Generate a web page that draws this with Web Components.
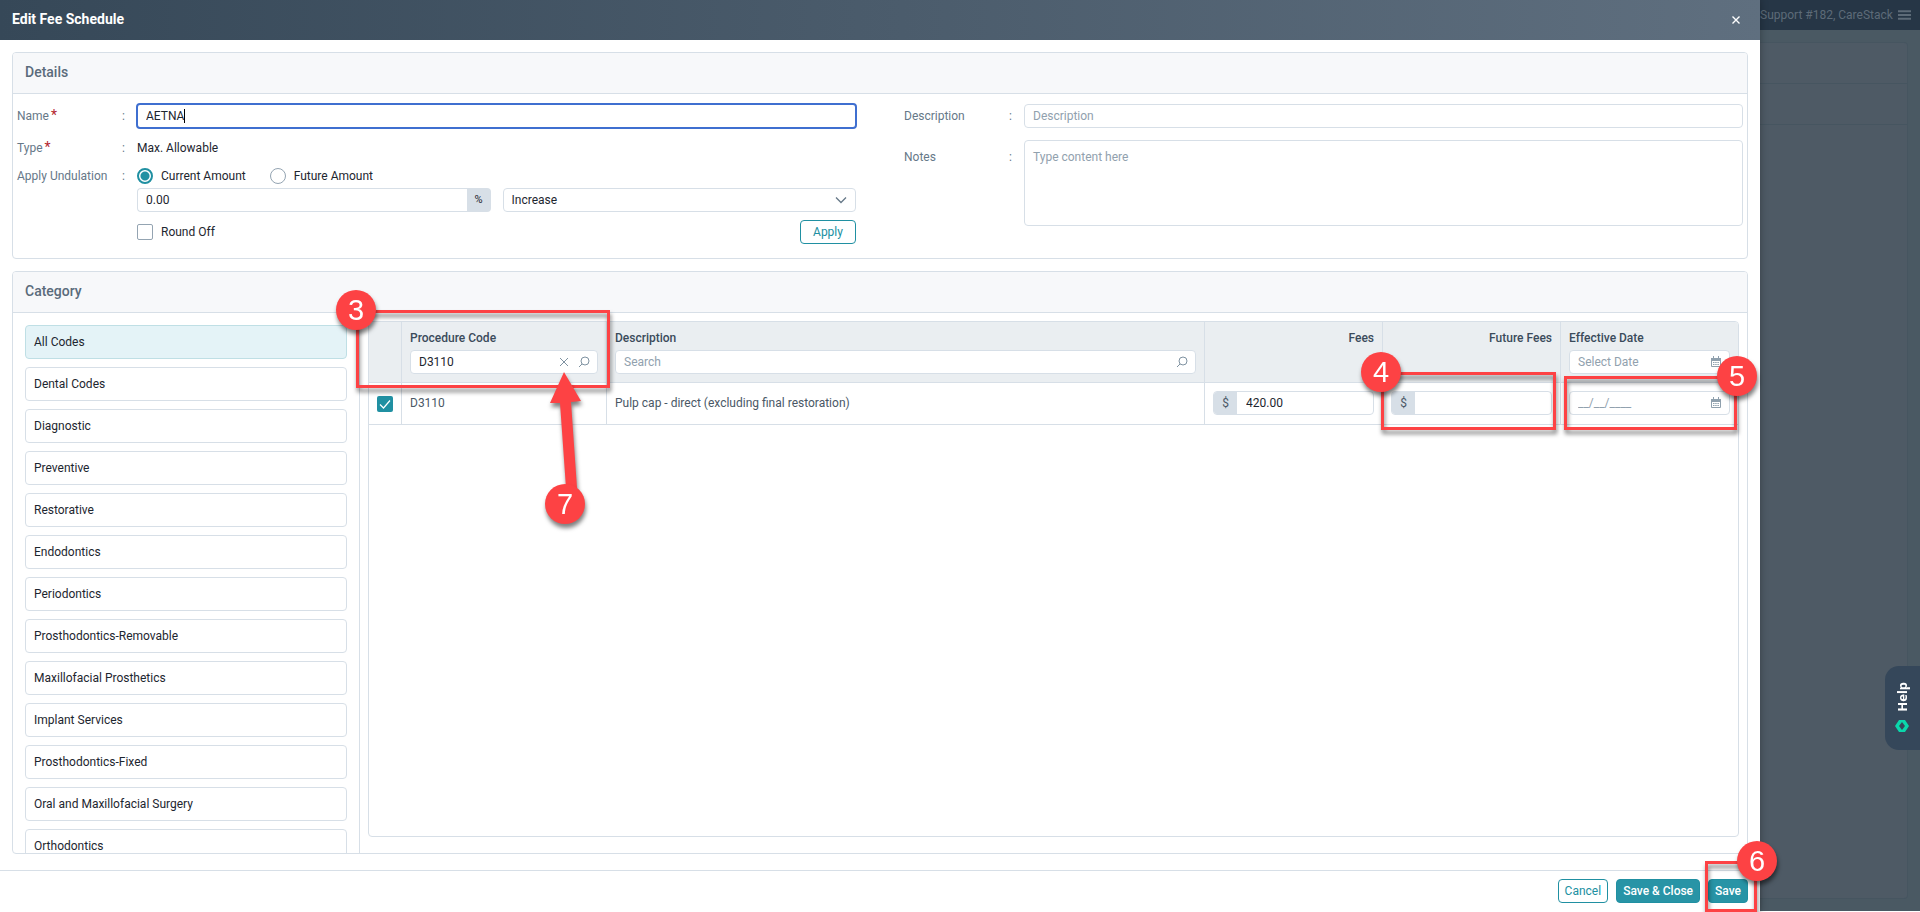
<!DOCTYPE html>
<html lang="en">
<head>
<meta charset="utf-8">
<title>Edit Fee Schedule</title>
<style>
html,body{margin:0;height:100%}
body{font:12px/16px Roboto,sans-serif;color:#1d262f;overflow:hidden}
</style>
</head>
<body>
<fee-page></fee-page>
<script>
const BASE = `*{box-sizing:border-box}
input,textarea,select,button{font:inherit;color:inherit;margin:0}
input::placeholder,textarea::placeholder{color:#91a1ae;opacity:1}`;

function define(name, css, html) {
  customElements.define(name, class extends HTMLElement {
    constructor() {
      super();
      const t = document.createElement('template');
      const markup = typeof html === 'function' ? html(this) : html;
      t.innerHTML = `<style>${BASE}${css}</style>${markup}`;
      this.attachShadow({ mode: 'open' }).append(t.content);
    }
  });
}

const SEARCH = `<svg width="12" height="12" viewBox="0 0 12 12" fill="none" stroke="#7f92a1"><circle cx="7" cy="5" r="4"/><path d="M4 8L1 11"/></svg>`;
const CAL = `<svg width="12" height="12" viewBox="0 0 12 12"><path d="M1.500 2.500h9v8h-9z" fill="#fff" stroke="#8fa0ad"/><path d="M1 2h10v3H1z" fill="#8fa0ad"/><path d="M3.500 0v3M8.500 0v3" stroke="#8fa0ad"/><path d="M3 6.500h6M3 8.500h6" stroke="#8fa0ad" stroke-dasharray="1.5 .7"/></svg>`;

define('section-card',
`:host{display:flex;flex-direction:column;border:1px solid #d7dfe7;border-radius:4px;overflow:hidden;background:#fff}
h2{margin:0;height:41px;flex:none;padding:0 12px 2px;display:flex;align-items:center;font-size:14px;font-weight:500;color:#5a6b7b;background:#f7f8fa;border-bottom:1px solid #d7dfe7}
.body{flex:1;min-height:0;display:flex}`,
el => `<h2>${el.getAttribute('heading')}</h2><div class="body"><slot></slot></div>`);

define('details-form',
`:host{display:grid;grid-template-columns:1fr 1fr;column-gap:48px;width:100%;height:164px;padding:10px 4px}
.col{display:flex;flex-direction:column}
.row{display:grid;grid-template-columns:105px 15px 1fr;min-height:24px;align-items:center}
.row>label,.row>span.l,.c{color:#667888}
i{font-style:normal;color:#b3262e;margin-left:2px;font-size:14px;line-height:12px}
input[type=text],textarea,select{width:100%;height:24px;border:1px solid #d7dfe7;border-radius:4px;background:#fff;padding:0 8px;display:block;outline:0}
#nm{border:2px solid #3f6fd0;padding:0 8px;margin:-1px;width:calc(100% + 2px);height:26px}
textarea{height:86px;padding:8px;resize:none}
.caret{position:absolute;left:47px;top:5px;width:1px;height:14px;background:#000}
.rel{position:relative}
.radios{display:flex;gap:24px}
.radios label,.chk{display:flex;align-items:center;gap:8px}
input[type=radio],input[type=checkbox]{appearance:none;width:16px;height:16px;border:1px solid #94a4b2;background:#fff;border-radius:2px}
input[type=radio]{border-radius:50%}
input[type=radio]:checked{border:2px solid #2090a2;background:radial-gradient(circle,#2090a2 4px,#fff 5px)}
.amt{display:grid;grid-template-columns:1fr 1fr;gap:12px}
.grp{display:flex}
.grp input{border-radius:4px 0 0 4px;border-right:0}
.grp span{width:24px;flex:none;background:#d7dfe7;border-radius:0 4px 4px 0;display:flex;align-items:center;justify-content:center;font-size:11px}
select{appearance:none}
.sel svg{position:absolute;right:9px;top:8px}
.end{display:flex;justify-content:space-between}
button{height:24px;width:56px;background:#fff;border:1px solid #2090a2;color:#2090a2;border-radius:4px;padding:0}
.t{align-items:start}.t>label,.t>.c{padding-top:9px}
.gap{margin-top:8px}.near{margin-top:4px}
.r{row-gap:12px}`,
`<div class="col">
<div class="row"><label for="nm">Name<i>*</i></label><span class="c">:</span><div class="rel"><input id="nm" type="text" value="AETNA"><div class="caret"></div></div></div>
<div class="row gap"><span class="l">Type<i>*</i></span><span class="c">:</span><span>Max. Allowable</span></div>
<div class="row near"><span class="l">Apply Undulation</span><span class="c">:</span><div class="radios"><label><input type="radio" name="amt" checked>Current Amount</label><label><input type="radio" name="amt">Future Amount</label></div></div>
<div class="row"><span></span><span></span><div class="amt"><div class="grp"><input type="text" value="0.00" aria-label="Percent"><span>%</span></div><div class="rel sel"><select aria-label="Direction"><option>Increase</option></select><svg width="12" height="8" viewBox="0 0 12 8" fill="none" stroke="#667888" stroke-width="1.3"><path d="M1 1.5L6 6.5L11 1.5"/></svg></div></div></div>
<div class="row gap"><span></span><span></span><div class="end"><label class="chk"><input type="checkbox">Round Off</label><button>Apply</button></div></div>
</div>
<div class="col r">
<div class="row"><label for="ds">Description</label><span class="c">:</span><input id="ds" type="text" placeholder="Description"></div>
<div class="row t"><label for="nt">Notes</label><span class="c">:</span><textarea id="nt" placeholder="Type content here"></textarea></div>
</div>`);

const CATS = ['All Codes', 'Dental Codes', 'Diagnostic', 'Preventive', 'Restorative', 'Endodontics', 'Periodontics', 'Prosthodontics-Removable', 'Maxillofacial Prosthetics', 'Implant Services', 'Prosthodontics-Fixed', 'Oral and Maxillofacial Surgery', 'Orthodontics'];
define('category-list',
`:host{display:flex;flex-direction:column;gap:8px;width:347px;flex:none;padding:12px;overflow:hidden;border-right:1px solid #d7dfe7}
button{flex:none;height:34px;text-align:left;padding:0 8px;background:#fff;border:1px solid #d7dfe7;border-radius:4px}
button.on{background:#e4f3f7;border-color:#bfdfe5}`,
CATS.map((c, i) => `<button class="${i ? '' : 'on'}">${c}</button>`).join(''));

define('fee-table',
`:host{display:block;flex:1;min-width:0;margin:8px 8px 16px;border:1px solid #d7dfe7;border-radius:4px;overflow:hidden}
table{width:100%;table-layout:fixed;border-collapse:separate;border-spacing:0}
col.pick{width:33px}col.code{width:205px}col.fee{width:178px}col.date{width:177px}
th,td{border-bottom:1px solid #d7dfe7;border-right:1px solid #d7dfe7;padding:0 8px;text-align:left;color:#4a5866}
th:first-child,td:first-child{padding:0 8px}
th:last-child,td:last-child{border-right:0}
th{height:61px;background:#eaeef1;font-weight:500;color:#3b4b5b;vertical-align:top;padding-top:8px}
th.n{text-align:right}
td{height:42px;padding-bottom:2px}
.f{display:flex;height:24px;border:1px solid #d7dfe7;border-radius:4px;background:#fff;align-items:center;gap:9px;padding-right:7px;overflow:hidden;font-weight:400}
th .f{margin-top:4px}
.f input{flex:1;min-width:0;width:0;border:0;background:none;outline:0;padding:0 0 0 8px;height:22px;color:#1d262f}
.f b{width:23px;height:24px;background:#d7dfe7;font-weight:400;display:flex;align-items:center;justify-content:center}
.f svg{flex:none}
.m{padding-right:0;gap:0}.m input{padding-left:9px}
input[type=checkbox]{appearance:none;display:block;width:16px;height:16px;border-radius:2px;background:#2090a2 url("data:image/svg+xml,%3Csvg xmlns='http://www.w3.org/2000/svg' viewBox='0 0 16 16'%3E%3Cpath d='M3 8.5L6.5 12L13 4.5' fill='none' stroke='white' stroke-width='1.2'/%3E%3C/svg%3E")}`,
`<table><colgroup><col class="pick"><col class="code"><col><col class="fee"><col class="fee"><col class="date"></colgroup>
<thead><tr><th></th>
<th>Procedure Code<div class="f"><input type="text" value="D3110" aria-label="Procedure Code"><svg width="10" height="10" viewBox="0 0 10 10" stroke="#7f92a1"><path d="M1 1L9 9M9 1L1 9"/></svg>${SEARCH}</div></th>
<th>Description<div class="f"><input type="text" placeholder="Search" aria-label="Description">${SEARCH}</div></th>
<th class="n">Fees</th><th class="n">Future Fees</th>
<th>Effective Date<div class="f"><input type="text" placeholder="Select Date" aria-label="Effective Date">${CAL}</div></th></tr></thead>
<tbody><tr><td><input type="checkbox" checked aria-label="Select D3110"></td><td>D3110</td><td>Pulp cap - direct (excluding final restoration)</td>
<td><div class="f m"><b>$</b><input type="text" value="420.00" aria-label="Fee"></div></td>
<td><div class="f m"><b>$</b><input type="text" aria-label="Future fee"></div></td>
<td><div class="f"><input type="text" placeholder="__/__/____" aria-label="Date">${CAL}</div></td></tr></tbody></table>`);

define('drawer-footer',
`:host{display:flex;flex:none;height:42px;border-top:1px solid #d7dfe7;padding:8px 12px 0;justify-content:flex-end;gap:8px}
button{height:24px;padding:0 6px;border:1px solid #2090a2;border-radius:4px;background:#2894a6;color:#fff;font-weight:500}
button.o{background:#fff;color:#2090a2;font-weight:400}`,
`<button class="o">Cancel</button><button>Save &amp; Close</button><button>Save</button>`);

define('edit-drawer',
`:host{display:flex;flex-direction:column;background:#fff;min-width:0;min-height:0;position:relative;box-shadow:0 0 8px rgba(0,0,0,.3)}
header{height:40px;flex:none;display:flex;align-items:center;justify-content:space-between;padding:0 20px 0 12px;color:#fff;background:linear-gradient(90deg,#364858,#5f6f7f)}
h1{margin:0;font-size:14px;font-weight:700;line-height:16px;padding-bottom:2px}
header button{border:0;background:none;padding:0;width:8px;height:16px;display:flex;align-items:center}
main{flex:1;min-height:0;padding:12px 12px 16px;display:flex;flex-direction:column;gap:12px}
.cat{flex:1;min-height:0}`,
`<header><h1>Edit Fee Schedule</h1><button aria-label="Close"><svg width="8" height="8" viewBox="0 0 8 8" stroke="#fff" stroke-width="1.4"><path d="M.5 .5L7.5 7.5M7.5 .5L.5 7.5"/></svg></button></header>
<main><section-card heading="Details"><details-form></details-form></section-card>
<section-card class="cat" heading="Category"><category-list></category-list><fee-table></fee-table></section-card></main>
<drawer-footer></drawer-footer>`);

define('dimmed-page',
`:host{display:flex;flex-direction:column;background:#4a5963;min-width:0;color:#5d6b78;border-bottom:1px solid #fff}
.bar{height:30px;flex:none;background:#263646;display:flex;align-items:center;gap:5px;padding-right:9px;justify-content:flex-end;white-space:nowrap}
.p{flex:1;margin:12px 12px 12px 0;border:1px solid #465560;border-left:0;border-radius:0 4px 4px 0;background:#4e5a65}
.p div{height:41px;border-bottom:1px solid #465560}`,
`<div class="bar"><span>Support #182, CareStack</span><svg width="14" height="10" viewBox="0 0 14 10" stroke="#5d6b78" stroke-width="2"><path d="M0 1h14M0 5h14M0 9h14"/></svg></div><div class="p"><div></div><div></div></div>`);

define('help-tab',
`:host{position:absolute;right:0;top:666px}
button{width:35px;height:84px;border:0;border-radius:14px 0 0 14px;background:#35475a;color:#fff;display:flex;flex-direction:column;align-items:center;justify-content:center;gap:8px;padding:0 2px 2px 0;font:700 13px/16px "Noto Sans",sans-serif}
span{writing-mode:vertical-rl;transform:rotate(180deg)}`,
`<button><span>Help</span><svg width="14" height="12" viewBox="0 0 14 12"><path fill="#0bd6ab" fill-rule="evenodd" d="M4 0H10L14 6L10 12H4L0 6ZM7 2L4 6L7 10L10 6Z"/></svg></button>`);

// Numbered walkthrough markers drawn over the interface.
const box = (x, y, w, h) => `<rect x="${x}" y="${y}" width="${w}" height="${h}"/>`;
const dot = (n, x, y) => `<circle cx="${x}" cy="${y}" r="20"/><text x="${x}" y="${y + 10}">${n}</text>`;
define('tour-marks',
`:host{position:absolute;inset:0;pointer-events:none}
svg{display:block;overflow:hidden}
rect{fill:none;stroke:#fd4244;stroke-width:3}
g{filter:drop-shadow(1px 4px 2px rgba(0,0,0,.5))}
circle,path{fill:#fd4244}
text{fill:#fff;font:29px "Liberation Sans",sans-serif;text-anchor:middle}`,
`<svg width="100%" height="100%"><g>${box(357.5, 311.5, 251, 75)}${box(1382.5, 373.5, 172, 55)}${box(1565.5, 377.5, 170, 51)}${box(1706.5, 862.5, 49, 48)}</g>
<g><path d="M564 372L581 401L571 402L577 488L566 488L560 403L550 403Z"/></g>
<g>${dot(3, 356, 310)}${dot(4, 1381, 372)}${dot(5, 1737, 376)}${dot(6, 1757, 861)}${dot(7, 565, 504)}</g></svg>`);

define('fee-page',
`:host{display:grid;grid-template-columns:minmax(0,1fr) 160px;grid-template-rows:minmax(0,1fr);height:100vh;position:relative;overflow:hidden}
edit-drawer{z-index:1}help-tab,tour-marks{z-index:2}`,
`<edit-drawer></edit-drawer><dimmed-page></dimmed-page><help-tab></help-tab><tour-marks></tour-marks>`);
</script>
</body>
</html>
